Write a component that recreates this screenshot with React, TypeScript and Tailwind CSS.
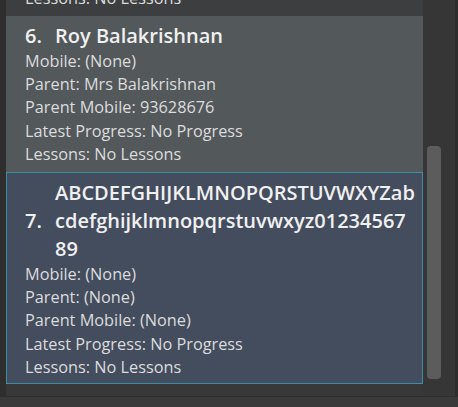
import React from 'react';

type Student = {
  index: number;
  name: string;
  mobile: string;
  parent: string;
  parentMobile: string;
  progress: string;
  lessons: string;
};

const students: Student[] = [
  {
    index: 5,
    name: 'Alex Yeoh',
    mobile: '87438807',
    parent: '(None)',
    parentMobile: '(None)',
    progress: 'No Progress',
    lessons: 'No Lessons',
  },
  {
    index: 6,
    name: 'Roy Balakrishnan',
    mobile: '(None)',
    parent: 'Mrs Balakrishnan',
    parentMobile: '93628676',
    progress: 'No Progress',
    lessons: 'No Lessons',
  },
  {
    index: 7,
    name: 'ABCDEFGHIJKLMNOPQRSTUVWXYZabcdefghijklmnopqrstuvwxyz0123456789',
    mobile: '(None)',
    parent: '(None)',
    parentMobile: '(None)',
    progress: 'No Progress',
    lessons: 'No Lessons',
  },
];

// alternating rows, last one is the selected cell
const rowStyles = [
  'pt-[5px] pb-[5px] bg-[#3d3e40] border border-transparent',
  'pt-[5px] pb-[5px] bg-[#53585b] border border-transparent',
  'pt-[6px] pb-[4px] bg-[#434d5e] border border-[#3b8ea3]',
];

const StudentCard: React.FC<{ student: Student; style: string }> = ({ student, style }) => (
  <div className={`pl-[18px] pr-[7px] ${style}`}>
    <div className="flex items-center text-[20px] leading-[28px] font-semibold text-[#f0f0f0]">
      <span className="w-[30px] shrink-0">{student.index}.</span>
      <span className="break-all min-w-0">{student.name}</span>
    </div>
    <div className="text-[16.3px] leading-[23.2px] text-[#dcdcdc]">
      <div>Mobile: {student.mobile}</div>
      <div>Parent: {student.parent}</div>
      <div>Parent Mobile: {student.parentMobile}</div>
      <div>Latest Progress: {student.progress}</div>
      <div>Lessons: {student.lessons}</div>
    </div>
  </div>
);

export default function App() {
  return (
    <div
      className="w-[458px] h-[407px] bg-[#383838] flex flex-col overflow-hidden"
      style={{ fontFamily: '"Open Sans", "Noto Sans", sans-serif' }}
    >
      <div className="flex flex-1 min-h-0">
        <div className="w-[6px] bg-[#2e2e2e]" />
        <div className="w-[417px] overflow-hidden">
          <div className="-mt-[140px]">
            {students.map((s, i) => (
              <StudentCard key={s.index} student={s} style={rowStyles[i]} />
            ))}
          </div>
        </div>
        <div className="w-[32px] bg-[#363636] pl-[4px] pt-[146px]">
          <div className="w-[14px] h-[233px] rounded-[4px] bg-[#5c5c5c]" />
        </div>
        <div className="w-[3px] bg-[#2d2d2d]" />
      </div>
      <div className="h-[11px] border-t border-[#2e2e2e] bg-[#3a3a3a]" />
    </div>
  );
}
